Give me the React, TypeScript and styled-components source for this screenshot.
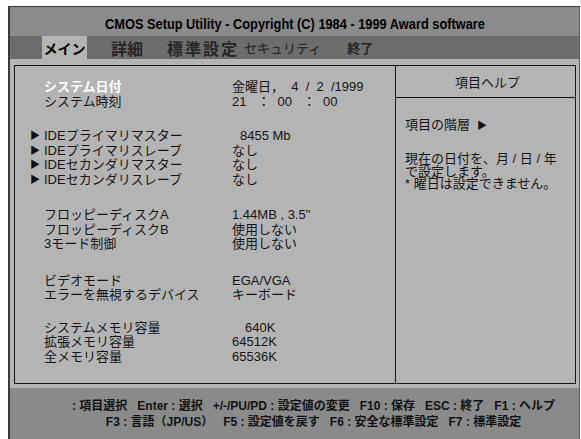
import React from 'react';
import styled, { createGlobalStyle } from 'styled-components';

const Global = createGlobalStyle`
  html, body { margin: 0; padding: 0; background: #ffffff; }
  body { font-family: "Liberation Sans", "Noto Sans CJK JP", sans-serif; }
`;

const Screen = styled.div`
  margin: 6px 0 0 8px;
  width: 572px;
  height: 433px;
  box-sizing: border-box;
  border-top: 1px solid #3a3a3a;
  border-left: 2px solid #3a3a3a;
  border-right: 1px solid #5a5a5a;
  display: flex;
  flex-direction: column;
  overflow: hidden;
`;

const TitleBar = styled.div`
  height: 29px;
  flex: none;
  background: #8b8b8b;
  display: flex;
  align-items: center;
  justify-content: center;
  padding-top: 4px;
  box-sizing: border-box;
  font-family: "Liberation Sans", sans-serif;
  font-weight: bold;
  font-size: 15.5px;
  color: #000;
  white-space: nowrap;
`;

const Condensed = styled.span<{ $scale: number }>`
  display: inline-block;
  transform: scaleX(${p => p.$scale});
  transform-origin: center;
`;

const MenuBar = styled.div`
  height: 23px;
  flex: none;
  background: #6d6d6d;
  display: flex;
  align-items: stretch;
  padding-left: 32px;
  font-family: "Noto Sans CJK JP", sans-serif;
`;

const MenuItem = styled.div<{ $active?: boolean; $size: number; $gap: number; $track?: number; $tone: string; $weight?: number }>`
  margin-left: ${p => p.$gap}px;
  width: ${p => (p.$active ? '45px' : 'auto')};
  display: flex;
  align-items: center;
  justify-content: center;
  background: ${p => (p.$active ? '#b4b4b4' : 'transparent')};
  color: ${p => p.$tone};
  font-size: ${p => p.$size}px;
  font-weight: ${p => p.$weight ?? 700};
  letter-spacing: ${p => p.$track ?? 0}px;
  line-height: 1;
  white-space: nowrap;
`;

const Main = styled.div`
  flex: none;
  height: 329px;
  box-sizing: border-box;
  background: #b4b4b4;
  padding: 6px 3px 4px 4px;
`;

const Box = styled.div`
  height: 319px;
  box-sizing: border-box;
  border: 1px solid #141414;
  display: grid;
  grid-template-columns: 381px 1fr;
`;

const LeftPane = styled.div`
  box-sizing: border-box;
  border-right: 1px solid #141414;
  padding: 14px 0 0 15px;
  font-size: 13px;
  color: #141414;
`;

const Group = styled.div<{ $gap: number }>`
  margin-top: ${p => p.$gap}px;
`;

const Row = styled.div`
  display: grid;
  grid-template-columns: 14px 188px 1fr;
  height: 14.5px;
  line-height: 14.5px;
  white-space: nowrap;
`;

const Marker = styled.span`
  font-size: 10px;
  line-height: 14.5px;
  color: #111;
`;

const Label = styled.span<{ $selected?: boolean }>`
  color: ${p => (p.$selected ? '#ffffff' : '#141414')};
  font-weight: ${p => (p.$selected ? 700 : 400)};
`;

const Value = styled.span<{ $indent?: number }>`
  padding-left: ${p => p.$indent ?? 0}px;
  color: #141414;
  white-space: pre;
`;

const RightPane = styled.div`
  display: flex;
  flex-direction: column;
  font-size: 13px;
  color: #141414;
`;

const HelpHeader = styled.div`
  height: 32px;
  flex: none;
  box-sizing: border-box;
  border-bottom: 1px solid #141414;
  display: flex;
  align-items: center;
  justify-content: center;
  padding-left: 4px;
`;

const HelpBody = styled.div`
  padding: 21px 0 0 9px;
`;

const HelpLine = styled.div<{ $gap?: number }>`
  margin-top: ${p => p.$gap ?? 0}px;
  height: 12.8px;
  line-height: 12.8px;
  white-space: nowrap;
`;

const HelpArrow = styled.span`
  font-size: 10px;
  margin-left: 7px;
`;

const Footer = styled.div`
  flex: 1;
  background: #8a8a8a;
  display: flex;
  flex-direction: column;
  align-items: center;
  padding: 10px 0 0 38px;
  font-family: "Liberation Sans", "Noto Sans CJK JP", sans-serif;
  font-weight: bold;
  font-size: 12px;
  color: #111;
`;

const FooterLine = styled.div`
  display: flex;
  gap: 10px;
  height: 16px;
  line-height: 16px;
  white-space: nowrap;
`;

const Key = styled.span``;

type Item = { marker?: boolean; label: string; value: string; indent?: number; selected?: boolean };

const groups: { gap: number; rows: Item[] }[] = [
  {
    gap: 0,
    rows: [
      { label: 'システム日付', value: '金曜日，  4  /  2  /1999', selected: true },
      { label: 'システム時刻', value: '21   ：  00   ：  00' },
    ],
  },
  {
    gap: 20,
    rows: [
      { marker: true, label: 'IDEプライマリマスター', value: '8455 Mb', indent: 8 },
      { marker: true, label: 'IDEプライマリスレーブ', value: 'なし' },
      { marker: true, label: 'IDEセカンダリマスター', value: 'なし' },
      { marker: true, label: 'IDEセカンダリスレーブ', value: 'なし' },
    ],
  },
  {
    gap: 21,
    rows: [
      { label: 'フロッピーディスクA', value: '1.44MB , 3.5"' },
      { label: 'フロッピーディスクB', value: '使用しない' },
      { label: '3モード制御', value: '使用しない' },
    ],
  },
  {
    gap: 22,
    rows: [
      { label: 'ビデオモード', value: 'EGA/VGA' },
      { label: 'エラーを無視するデバイス', value: 'キーボード' },
    ],
  },
  {
    gap: 18,
    rows: [
      { label: 'システムメモリ容量', value: '640K', indent: 13 },
      { label: '拡張メモリ容量', value: '64512K' },
      { label: '全メモリ容量', value: '65536K' },
    ],
  },
];

const footer1 = [
  ['', '項目選択'],
  ['Enter', '選択'],
  ['+/-/PU/PD', '設定値の変更'],
  ['F10', '保存'],
  ['ESC', '終了'],
  ['F1', 'ヘルプ'],
];

const footer2 = [
  ['F3', '言語（JP/US）'],
  ['F5', '設定値を戻す'],
  ['F6', '安全な標準設定'],
  ['F7', '標準設定'],
];

export default function App() {
  return (
    <>
      <Global />
      <Screen>
        <TitleBar>
          <Condensed $scale={0.826}>CMOS Setup Utility - Copyright (C) 1984 - 1999 Award software</Condensed>
        </TitleBar>
        <MenuBar>
          <MenuItem $active $size={14} $gap={0} $tone="#000">メイン</MenuItem>
          <MenuItem $size={16} $gap={24} $tone="#262626">詳細</MenuItem>
          <MenuItem $size={16} $gap={24} $track={2} $tone="#262626">標準設定</MenuItem>
          <MenuItem $size={13} $gap={5} $tone="#2e2e2e" $weight={500}>セキュリティ</MenuItem>
          <MenuItem $size={13} $gap={26} $tone="#262626">終了</MenuItem>
        </MenuBar>
        <Main>
          <Box>
            <LeftPane>
              {groups.map((g, gi) => (
                <Group key={gi} $gap={g.gap}>
                  {g.rows.map((r, ri) => (
                    <Row key={ri}>
                      <Marker>{r.marker ? '▶' : ''}</Marker>
                      <Label $selected={r.selected}>{r.label}</Label>
                      <Value $indent={r.indent}>{r.value}</Value>
                    </Row>
                  ))}
                </Group>
              ))}
            </LeftPane>
            <RightPane>
              <HelpHeader>項目ヘルプ</HelpHeader>
              <HelpBody>
                <HelpLine>
                  項目の階層<HelpArrow>▶</HelpArrow>
                </HelpLine>
                <HelpLine $gap={21}>現在の日付を、月 / 日 / 年</HelpLine>
                <HelpLine>で設定します。</HelpLine>
                <HelpLine>* 曜日は設定できません。</HelpLine>
              </HelpBody>
            </RightPane>
          </Box>
        </Main>
        <Footer>
          <FooterLine>
            {footer1.map(([k, d], i) => (
              <Key key={i}>{k ? `${k} : ${d}` : `: ${d}`}</Key>
            ))}
          </FooterLine>
          <FooterLine>
            {footer2.map(([k, d], i) => (
              <Key key={i}>{`${k} : ${d}`}</Key>
            ))}
          </FooterLine>
        </Footer>
      </Screen>
    </>
  );
}
